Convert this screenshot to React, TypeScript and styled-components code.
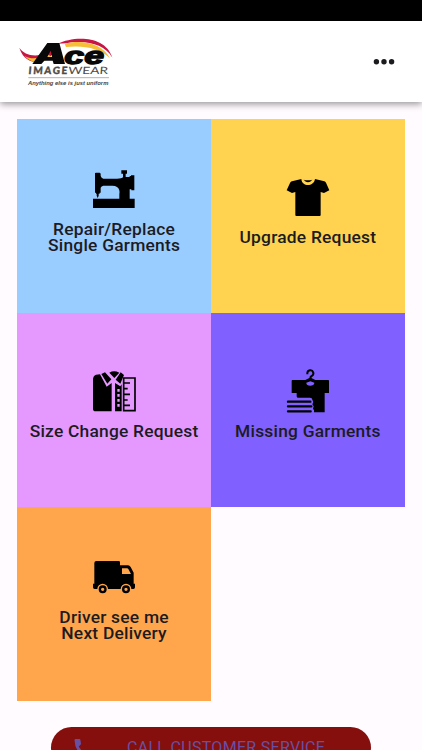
import React from "react";
import styled, { createGlobalStyle } from "styled-components";

const GlobalStyle = createGlobalStyle`
  * { box-sizing: border-box; }
  html, body { margin: 0; height: 100%; overflow: hidden; }
  body { background: #fffbff; font-family: Roboto, "Liberation Sans", sans-serif; }
`;

const Screen = styled.div`
  width: 422px;
  height: 750px;
  display: flex;
  flex-direction: column;
  overflow: hidden;
  background: #fffbff;
`;

const StatusBar = styled.div`
  flex: 0 0 21px;
  background: #000;
`;

const Header = styled.header`
  flex: 0 0 81px;
  display: flex;
  align-items: center;
  justify-content: space-between;
  padding: 0 27px 0 10px;
  background: #fff;
  box-shadow: 0 2px 7px rgba(0, 0, 0, 0.42);
`;

const LogoMark = styled.svg`
  display: block;
  width: 110px;
  height: 65px;
  margin-top: 2px;
`;

const MenuButton = styled.button`
  display: flex;
  padding: 0;
  border: 0;
  background: none;
`;

const Grid = styled.main`
  flex: none;
  display: grid;
  grid-template-columns: 193.8px 193.8px;
  grid-auto-rows: 193.8px;
  margin: 17.2px 17.2px 0;
`;

const Tile = styled.div<{ $color: string }>`
  display: flex;
  flex-direction: column;
  align-items: center;
  justify-content: center;
  gap: 10px;
  padding-bottom: 11.4px;
  background: ${(p) => p.$color};
`;

const TileIcon = styled.svg`
  display: block;
  width: 44px;
  height: 44px;
`;

const Label = styled.div`
  font-size: 17.4px;
  font-weight: 500;
  line-height: 16px;
  letter-spacing: 0.22px;
  text-align: center;
  white-space: pre-line;
  color: #1c1b1f;
`;

const CallButton = styled.button`
  flex: none;
  display: flex;
  align-items: center;
  width: 320px;
  height: 41px;
  margin: 26.7px 0 0 51px;
  padding: 0 0 0 23px;
  gap: 37px;
  border: 0;
  border-radius: 21px;
  background: #850f0d;
  color: #6750a4;
  font: 400 16px/20px Roboto, sans-serif;
  letter-spacing: 0.3px;
  white-space: nowrap;
`;

const Logo = () => (
  <LogoMark viewBox="0 0 330 195">
    <path d="M28 53C40 70 62 80 90 75C106 71 118 61 128 52L132 68C116 84 98 97 76 96C50 94 34 74 28 53Z" fill="#c91543" />
    <path d="M43 77C66 90 90 85 112 72L124 80C98 101 64 102 43 77Z" fill="#f7bd37" />
    <path d="M143 41C190 18 286 14 307 83C284 42 226 29 168 40Z" fill="#c91543" />
    <path d="M164 41C214 29 276 39 300 85C270 55 222 45 168 51Z" fill="#f7bd37" />
    <path d="M67 102L112 39H148L165 102H131L128 92H103L94 102ZM112 81H126L122 62Z" fill="#080808" fillRule="evenodd" />
    <text x="163" y="101" textLength="119" lengthAdjust="spacingAndGlyphs" fontFamily="Liberation Sans" fontWeight="700" fontStyle="italic" fontSize="71" fill="#080808" stroke="#080808" strokeWidth="4">ce</text>
    <g transform="translate(55 132) skewX(-5)" fontFamily="Lato" fontSize="30" fill="#4f4b46">
      <text textLength="116" fontWeight="900" stroke="#4f4b46" strokeWidth="1">IMAGE</text>
      <text x="119" textLength="119" lengthAdjust="spacingAndGlyphs" fontWeight="400">WEAR</text>
    </g>
    <path d="M55 143H297" stroke="#8c8c8c" strokeWidth="2" />
    <text x="54" y="165" textLength="241" lengthAdjust="spacingAndGlyphs" fontFamily="Liberation Sans" fontWeight="700" fontStyle="italic" fontSize="18" fill="#44423f">Anything else is just uniform</text>
  </LogoMark>
);

const SewingIcon = () => (
  <TileIcon viewBox="36 21 132 132">
    <path d="M45 40Q45 38 48 38H59Q62 39 62 43V48Q64 54 70 56H111Q126 56 129 52V41H124V31H141V41H137V51H149V48H153V46H163V91H154V88H149V116H164V144H39V116H118V103Q121 88 111 81Q106 77 97 77H70Q64 78 62 83V98H59V101H56V107L53 114L50 107V101H48V98H45Z" />
  </TileIcon>
);

const ShirtIcon = () => (
  <TileIcon viewBox="33 30 132 132">
    <path d="M79 42C81 66 116 66 120 42L148 49Q151 50 153 53L163 76L147 84L137 81V150Q137 153 134 153H64Q61 153 61 150V81L51 84L35 76L45 54Q47 50 51 49Z" />
    <path d="M86 44Q99 48 112 44Q99 59 86 44Z" />
  </TileIcon>
);

const SizeIcon = () => (
  <TileIcon viewBox="36 27 132 132">
    <path d="M60 43L80 80L95 69V154H47Q39 154 39 146V58Q39 48 48 44Z" />
    <path d="M64 42L75 37L94 58L82 71ZM88 38Q102 30 118 38L103 54ZM122 37L132 45L121 71L107 59Z" />
    <path fillRule="evenodd" d="M105 69L121 79L125 73V154H105ZM112 87V95H119V87ZM112 102V110H119V102ZM112 117V125H119V117ZM112 132V140H119V132Z" />
    <path d="M131 54H165V152H131ZM132 69H150M132 86H143M132 103H150M132 120H143M132 136H150" fill="none" stroke="#000" strokeWidth="5" />
  </TileIcon>
);

const HangerIcon = () => (
  <TileIcon viewBox="33 27 132 132">
    <path d="M97 43V40A9 9 0 1 1 110 48Q106 50 106 55V60" fill="none" stroke="#000" strokeWidth="6" />
    <path fillRule="evenodd" d="M52 60H91L103 54H109L121 60H160Q162 60 162 63V99H149V157H117V151L114 146L116 139L112 133L115 126L112 119Q112 113 105 113H68Q65 113 65 109V99H50V63Q50 60 52 60ZM94 68C92 80 119 80 118 68L106 64Z" />
    <path d="M39 125H106M39 139H109M39 154H107" stroke="#000" strokeWidth="7" strokeLinecap="round" />
  </TileIcon>
);

const TruckIcon = () => (
  <TileIcon viewBox="36 15 132 132">
    <path fillRule="evenodd" d="M49 33H116Q120 33 120 37V46H144Q149 46 152 51L161 68V101H165V112Q165 117 160 117H154A16 16 0 0 0 122 117H84A16 16 0 0 0 52 117H44Q39 117 39 112V101H43V39Q43 33 49 33ZM126 55V72H153L145 57Q144 55 141 55Z" />
    <circle cx="68" cy="118" r="8.5" fill="none" stroke="#000" strokeWidth="7" />
    <circle cx="138" cy="118" r="8.5" fill="none" stroke="#000" strokeWidth="7" />
  </TileIcon>
);

const tiles = [
  { label: "Repair/Replace\nSingle Garments", color: "#99ccff", Icon: SewingIcon },
  { label: "Upgrade Request", color: "#ffd34f", Icon: ShirtIcon },
  { label: "Size Change Request", color: "#e599ff", Icon: SizeIcon },
  { label: "Missing Garments", color: "#8060ff", Icon: HangerIcon },
  { label: "Driver see me\nNext Delivery", color: "#ffa64d", Icon: TruckIcon },
];

export default function App() {
  return (
    <Screen>
      <GlobalStyle />
      <StatusBar />
      <Header>
        <Logo />
        <MenuButton aria-label="Menu">
          <svg width="22" height="6" viewBox="0 0 22 6" fill="#1c1b1f">
            <circle cx="3.4" cy="2.8" r="2.7" />
            <circle cx="11" cy="2.8" r="2.7" />
            <circle cx="18.6" cy="2.8" r="2.7" />
          </svg>
        </MenuButton>
      </Header>
      <Grid>
        {tiles.map(({ label, color, Icon }) => (
          <Tile key={label} $color={color}>
            <Icon />
            <Label>{label}</Label>
          </Tile>
        ))}
      </Grid>
      <CallButton>
        <svg width="16" height="18" viewBox="0 0 16 18" fill="#6750a4">
          <path d="M1.5 0H5.5Q6.3 0 6.4 1L7 4.5Q7 5.3 6.5 5.8L4.7 7.6Q6.5 11 9.5 12.8L11.5 11L15 12V16Q15 17 14 17Q1 15 0.5 1Q0.5 0 1.5 0Z" />
        </svg>
        CALL CUSTOMER SERVICE
      </CallButton>
    </Screen>
  );
}
